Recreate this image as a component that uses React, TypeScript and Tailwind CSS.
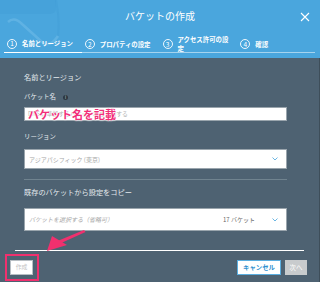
import React from 'react'

const steps = [
  { n: '1', label: '名前とリージョン', active: true },
  { n: '2', label: 'プロパティの設定' },
  { n: '3', label: 'アクセス許可の設定' },
  { n: '4', label: '確認' },
]

function Chevron() {
  return (
    <svg width="6" height="4" viewBox="0 0 6 4" className="shrink-0">
      <polyline points="0.5,0.5 3,3 5.5,0.5" fill="none" stroke="#5aaee0" strokeWidth="0.9" />
    </svg>
  )
}

export default function App() {
  return (
    <div className="relative w-[320px] h-[282px] overflow-hidden bg-[#4e6272] font-['Noto_Sans_CJK_JP','Noto_Sans',sans-serif] text-white">
      {/* Header */}
      <header className="relative h-[58px] bg-[#4aa6dd] overflow-hidden">
        <svg className="absolute inset-0" width="320" height="58" viewBox="0 0 320 58">
          <path d="M0 0 H56 V8 Q56 14 48 14 H0 Z" fill="#3f9bd3" opacity="0.35" />
          <path d="M56 0 Q60 20 58 36" fill="none" stroke="#3f9bd3" strokeWidth="2" opacity="0.35" />
          <path d="M8 22 Q14 16 22 24 L42 42 Q50 48 58 36" fill="none" stroke="#7bc2ea" strokeWidth="2.5" opacity="0.45" />
        </svg>
        <div className="relative pt-[10px] text-center text-[10px] leading-[12px]">バケットの作成</div>
        <button className="absolute right-[10px] top-[12px] w-[10px] h-[10px]">
          <svg width="10" height="10" viewBox="0 0 10 10">
            <path d="M1 1 L9 9 M9 1 L1 9" stroke="#fff" strokeWidth="1.1" />
          </svg>
        </button>
        <div className="relative mt-[13px] ml-[4px] mr-[5px] flex h-[18px] border-b border-white/50">
          {steps.map((s) => (
            <div
              key={s.n}
              className={`w-[81px] -mb-px flex items-center gap-[5px] pl-[3px] ${s.active ? 'border-b border-white' : ''}`}
            >
              <span className="w-[10px] h-[10px] rounded-full border border-white/90 flex items-center justify-center text-[6.5px] leading-none shrink-0">
                {s.n}
              </span>
              <span className="max-w-[54px] text-[6.4px] leading-[9px] font-bold">{s.label}</span>
            </div>
          ))}
        </div>
      </header>

      {/* Body */}
      <div className="relative px-[15px] border-r border-[#3e4e5a] h-[224px]">
        <div className="ml-[9px] w-[263px] flex flex-col">
          <div className="mt-[14px] text-[7.2px] leading-[10px] text-[#e4eaee]">名前とリージョン</div>
          <div className="mt-[10px] flex items-center gap-[5px] text-[6.4px] leading-[10px] text-[#e4eaee]">
            <span>バケット名</span>
            <span className="ml-[2px] w-[5px] h-[5px] rounded-full bg-[#2c3740] flex items-center justify-center text-[4px] leading-none text-[#cfd6db]">i</span>
          </div>
          <div className="mt-[5px] h-[14px] bg-white border border-[#9aa5ad] flex items-center px-[3px] text-[5.8px] text-[#b0b0b0]">
            DNS に準拠するバケット名を入力する
          </div>
          <div className="mt-[11px] text-[6.4px] leading-[10px] text-[#e4eaee]">リージョン</div>
          <div className="mt-[7px] h-[20px] bg-white border border-[#9aa5ad] flex items-center justify-between pl-[4px] pr-[8px] text-[6px] text-[#a8a8a8]">
            <span>アジアパシフィック (東京)</span>
            <Chevron />
          </div>
          <div className="mt-[10px] h-px bg-[#70838f]" />
          <div className="mt-[7px] text-[7.2px] leading-[10px] text-[#e4eaee]">既存のバケットから設定をコピー</div>
          <div className="mt-[11px] h-[23px] bg-white border border-[#9aa5ad] flex items-center pl-[4px] pr-[8px] text-[6px] text-[#a8a8a8]">
            <span className="italic flex-1">バケットを選択する（省略可）</span>
            <span className="mr-[17px] text-[#666]">17 バケット</span>
            <Chevron />
          </div>
        </div>
        <div className="mt-[19px] h-px bg-white" />
      </div>

      {/* Footer */}
      <div className="absolute left-0 right-0 top-[260px] flex items-start justify-between pl-[10px] pr-[13px]">
        <button className="w-[23px] h-[15px] bg-white border border-[#b8bfc4] text-[5.8px] text-[#c4c4c4]">作成</button>
        <div className="flex gap-[4px]">
          <button className="w-[44px] h-[15px] bg-white border border-[#5aaee0] text-[6.4px] font-bold text-[#2f8fcf]">キャンセル</button>
          <button className="w-[22px] h-[15px] bg-[#c8cbcd] text-[6.4px] text-white">次へ</button>
        </div>
      </div>

      {/* Annotations */}
      <div className="absolute left-[28px] top-[107px] text-[11px] leading-[14px] font-bold text-[#f22f7a] [text-shadow:0_0_2px_#fff,0_0_2px_#fff,0_0_1px_#fff]">
        バケット名を記載
      </div>
      <div className="absolute left-[5px] top-[254px] w-[34px] h-[27px] border-[2.5px] border-[#f0306e]" />
      <svg className="absolute inset-0 pointer-events-none" width="320" height="282" viewBox="0 0 320 282">
        <polygon points="84,230 85.5,232 59,244 57.5,241" fill="#f0306e" />
        <polygon points="47,251 52,236 67,245" fill="#f0306e" />
      </svg>
    </div>
  )
}
